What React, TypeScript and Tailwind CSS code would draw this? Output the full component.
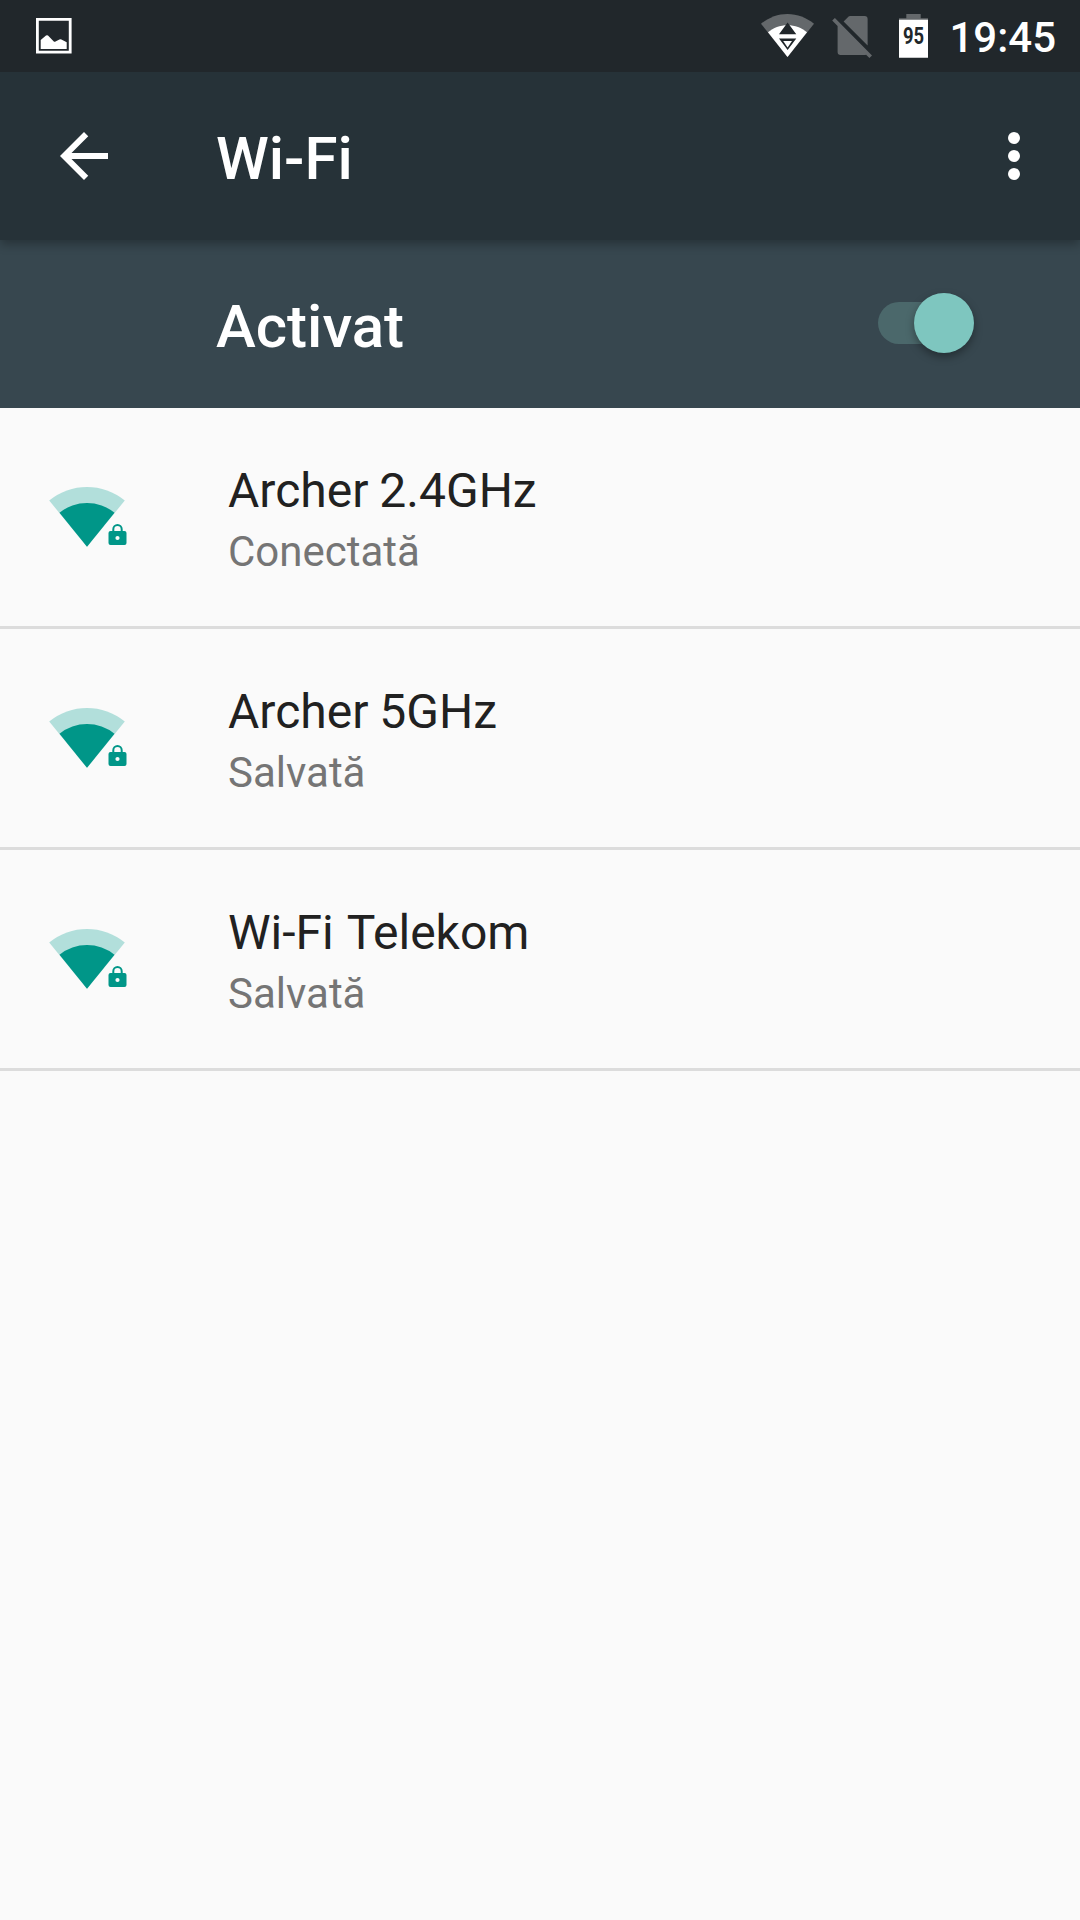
import clsx from "clsx";

interface Network {
  ssid: string;
  status: string;
  titleClassName?: string;
}

const networks: Network[] = [
  { ssid: "Archer 2.4GHz", status: "Conectată" },
  { ssid: "Archer 5GHz", status: "Salvată" },
  {
    ssid: "Wi-Fi Telekom",
    status: "Salvată",
    titleClassName: "[word-spacing:2px]",
  },
];

const ScreenshotIcon = () => (
  <svg className="h-9 w-9" viewBox="0 0 36 36">
    <path
      d="M1.4 1.4h32.8v32.8H1.4z"
      fill="none"
      stroke="#fff"
      strokeWidth="2.8"
    />
    <path
      d="M4.7 22l5.3-4.4q1-.8 2 0l5.8 5.8q.8.7 1.7.2l3.9-2.1q1-.6 2 0l5.3 2.8v6.6H4.7z"
      fill="#fff"
    />
  </svg>
);

const WifiStatusIcon = () => (
  <svg className="h-[72px] w-[54px]" viewBox="0 0 54 72">
    <path
      d="M26.5 57L0 23.8C7.5 17.6 16.8 14 26.5 14S45.5 17.6 53 23.8z"
      fill="#64686b"
    />
    <path
      d="M26.5 57L7 32.2C12.4 27.8 19 25.2 26.5 25.2S40.6 27.8 46 32.2z"
      fill="#fff"
    />
    {/* upload / download activity arrows */}
    <path
      d="M26.6 22.6L35.3 34.3H18zM18 38.6h17.3L26.6 50z"
      fill="#21272b"
    />
    <path d="M22.2 41h8.8l-4.4 6.6z" fill="#fff" />
  </svg>
);

const NoSimIcon = () => (
  <svg className="h-[72px] w-[40px]" viewBox="0 0 40 72" fill="#64686b">
    <path d="M.2 20.5L2.9 18 40 55.4 37.4 58l-3.3-3.2q-.8.2-2 .2H8.6q-3 0-3-3V26z" />
    <path d="M11.6 21.6l5-5.1q.6-.5 1.4-.5h14.6q3 0 3 3v26.6z" />
  </svg>
);

const BatteryIcon = () => (
  <div className="relative h-[72px] w-[29px]">
    <svg className="h-[72px] w-[29px]" viewBox="0 0 29 72">
      <path d="M7.3 14h14.4v4.3H29v2H0v-2h7.3z" fill="#64686b" />
      <path d="M0 19.700h29v38H0z" fill="#fff" />
    </svg>
    <span className="absolute inset-x-0 top-[24px] flex scale-x-[.8] justify-center text-[23px] leading-[26px] font-bold text-[#21272b]">
      95
    </span>
  </div>
);

const SignalIcon = () => (
  <svg className="mt-[79px] h-[60px] w-[78px]" viewBox="0 0 78 60">
    <path d="M38 59.8L.2 13.5A59.7 59.7 0 0 1 75.8 13.5z" fill="#b2dfdb" />
    <path d="M38 59.8L10.5 25.700A43.9 43.9 0 0 1 65.5 25.700z" fill="#009688" />
    <path
      d="M64.3 45v-2.800a4.200 4.200 0 0 1 8.400 0V45"
      fill="none"
      stroke="#009688"
      strokeWidth="2"
    />
    <path
      fillRule="evenodd"
      d="M61.500 44h14q2 0 2 2v10q0 2-2 2h-14q-2 0-2-2V46q0-2 2-2zm7 4.900a2.100 2.100 0 1 0 0 4.200 2.100 2.100 0 0 0 0-4.200z"
      fill="#009688"
    />
  </svg>
);

const StatusBar = () => (
  <div className="relative z-20 flex h-[72px] items-center bg-[#21272b] pr-6 pl-9">
    <ScreenshotIcon />
    <div className="ml-auto flex items-center">
      <WifiStatusIcon />
      <div className="ml-[17px]">
        <NoSimIcon />
      </div>
      <div className="ml-[27px]">
        <BatteryIcon />
      </div>
      <span className="ml-[21px] pt-[3px] text-[42px] leading-[50px] font-medium text-white">
        19:45
      </span>
    </div>
  </div>
);

const AppBar = () => (
  <header className="relative z-10 flex h-[168px] items-center bg-[#263238] px-12 text-white shadow-[0_4px_10px_rgba(0,0,0,0.3)]">
    <button aria-label="Înapoi">
      <svg className="h-[72px] w-[72px]" viewBox="0 0 24 24" fill="currentColor">
        <path d="M20 11H7.83l5.59-5.59L12 4l-8 8 8 8 1.41-1.41L7.83 13H20v-2z" />
      </svg>
    </button>
    <h1 className="ml-24 pt-[5px] text-[60px] leading-[70px] font-medium">Wi-Fi</h1>
    <button className="-mr-[18px] ml-auto" aria-label="Mai multe opțiuni">
      <svg className="h-[72px] w-[72px]" viewBox="0 0 24 24" fill="currentColor">
        <circle cx="12" cy="6" r="2" />
        <circle cx="12" cy="12" r="2" />
        <circle cx="12" cy="18" r="2" />
      </svg>
    </button>
  </header>
);

const SwitchBar = () => (
  <div className="flex h-[168px] items-center justify-between bg-[#37474f] pr-[106.5px] pl-[216px]">
    <span className="pt-[5px] text-[60px] leading-[70px] font-medium text-white">
      Activat
    </span>
    <button
      role="switch"
      aria-checked="true"
      aria-label="Wi-Fi"
      className="mb-[2px] flex h-[60px] w-[95.5px] items-center justify-end"
    >
      <span className="-mr-[45px] h-[42px] w-[80.5px] rounded-l-full bg-[#4b686b]" />
      <span className="h-[60px] w-[60px] rounded-full bg-[#7ec6bf] shadow-[0_4px_8px_rgba(0,0,0,0.35)]" />
    </button>
  </div>
);

const NetworkRow = ({ ssid, status, titleClassName }: Network) => (
  <li className="flex h-[221px] border-b-[3px] border-[#dcdcdc] pl-[49px]">
    <SignalIcon />
    <div className="ml-[101px] pt-[53px]">
      <p
        className={clsx(
          "text-[48px] leading-[60px] text-[#212121]",
          titleClassName ?? "[word-spacing:-1px]"
        )}
      >
        {ssid}
      </p>
      <p className="text-[42px] leading-[62px] text-[#757575]">{status}</p>
    </div>
  </li>
);

export default function App() {
  return (
    <div className="h-[1920px] w-[1080px] overflow-hidden bg-[#fafafa] font-[Roboto,sans-serif]">
      <StatusBar />
      <AppBar />
      <SwitchBar />
      <ul>
        {networks.map((network) => (
          <NetworkRow key={network.ssid} {...network} />
        ))}
      </ul>
    </div>
  );
}
